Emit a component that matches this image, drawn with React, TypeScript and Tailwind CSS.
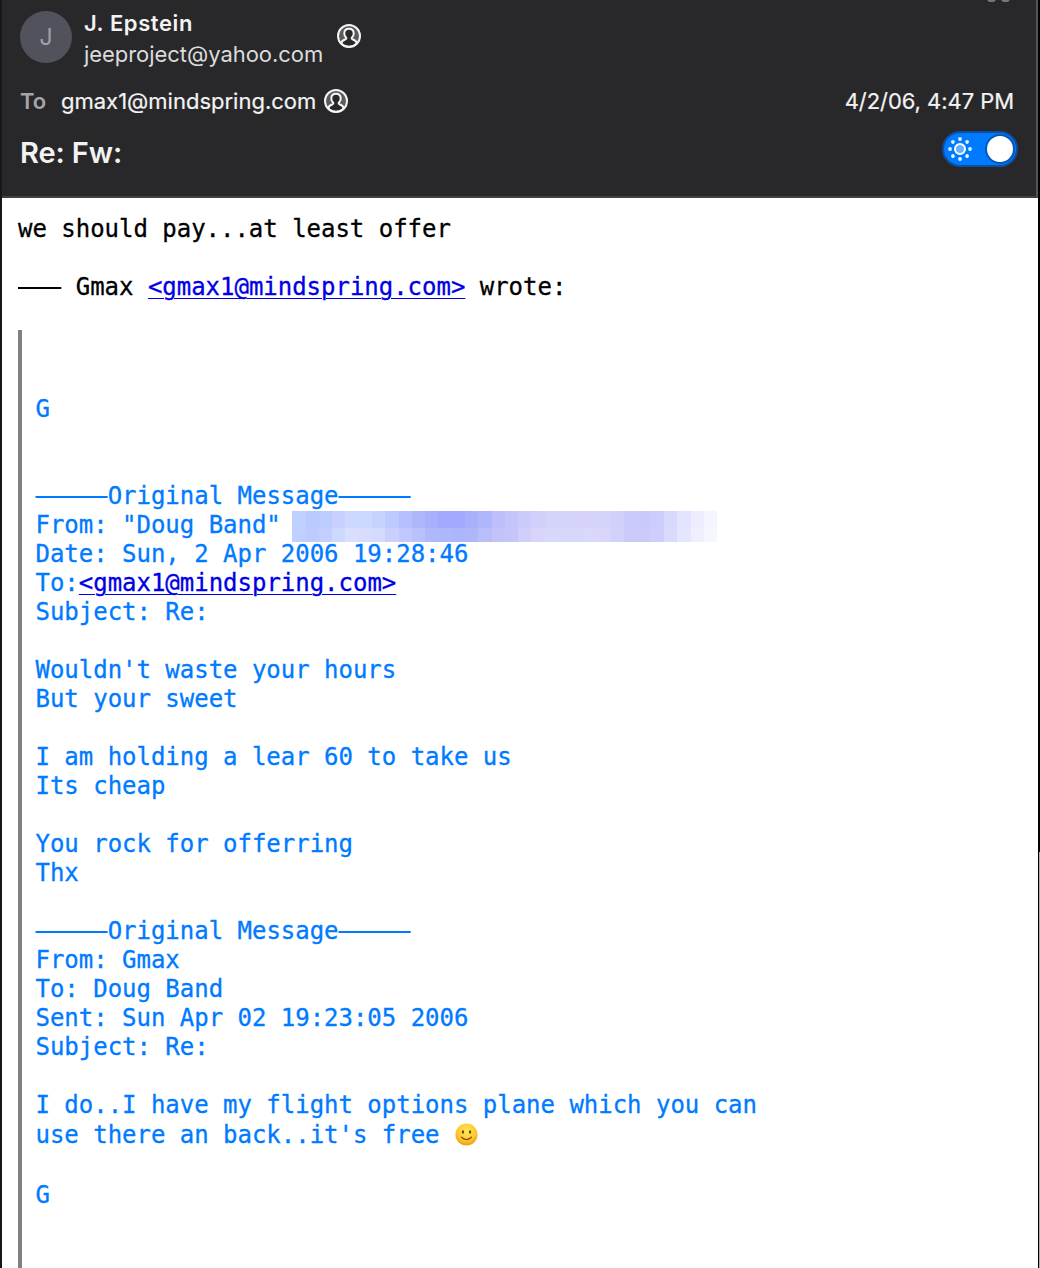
const TOP_ROW = [
  'bg-[#bfd1ff]', 'bg-[#b9caff]', 'bg-[#bcccff]', 'bg-[#c7d0ff]', 'bg-[#ccd8ff]', 'bg-[#ccd8ff]', 'bg-[#c7d3ff]', 'bg-[#bccaff]',
  'bg-[#b6bfff]', 'bg-[#b0b6fb]', 'bg-[#a8affd]', 'bg-[#a3a9ff]', 'bg-[#a3a9ff]', 'bg-[#a9b0fc]', 'bg-[#b0b6fb]', 'bg-[#bebefb]',
  'bg-[#c4c5fb]', 'bg-[#cacbfb]', 'bg-[#d1d0fb]', 'bg-[#d4d3fa]', 'bg-[#d4d3fa]', 'bg-[#d5d2fa]', 'bg-[#d5d3fb]', 'bg-[#d4d3fa]',
  'bg-[#d0d0fa]', 'bg-[#cacbfb]', 'bg-[#c9c9fb]', 'bg-[#ccccfd]', 'bg-[#d8d8fc]', 'bg-[#e3e3fd]', 'bg-[#eeedfe]', 'bg-[#f5f5ff]',
];

const BOTTOM_ROW = [
  'bg-[#c0d0ff]', 'bg-[#bdcbff]', 'bg-[#c3cfff]', 'bg-[#cfd8ff]', 'bg-[#d8dfff]', 'bg-[#dadcff]', 'bg-[#d4dbff]', 'bg-[#cbcffd]',
  'bg-[#c1c7ff]', 'bg-[#bac2fe]', 'bg-[#b0b7fc]', 'bg-[#adb7fc]', 'bg-[#adb6fc]', 'bg-[#afb7fb]', 'bg-[#b9befb]', 'bg-[#c3c2fb]',
  'bg-[#c6c5fb]', 'bg-[#d0cffb]', 'bg-[#d7d5fb]', 'bg-[#d8d8fb]', 'bg-[#d7d7fb]', 'bg-[#d7d6fb]', 'bg-[#d9d8fb]', 'bg-[#d8d7fb]',
  'bg-[#d2d1fb]', 'bg-[#cbcbfb]', 'bg-[#cbcafb]', 'bg-[#cecefd]', 'bg-[#dadafc]', 'bg-[#e5e5fd]', 'bg-[#efeffe]', 'bg-[#f6f6ff]',
];

function ContactIcon() {
  return (
    <svg viewBox="0 0 24 24" className="size-6 shrink-0" fill="none">
      <circle cx="12" cy="12" r="11" fill="#5b5b5e" />
      <path
        d="M4.200 19.400c.6-2.600 2.200-3.300 3.900-3.900 1.300-.4 1.500-1.100 1-1.900C7.800 12.500 7.300 11.300 7.300 9.500c0-2.900 1.900-4.700 4.700-4.700s4.700 1.800 4.700 4.700c0 1.800-.5 3-1.800 4.100-.5.8-.3 1.500 1 1.900 1.700.6 3.300 1.300 3.900 3.900-3.900 4.300-11.700 4.300-15.600 0Z"
        fill="#28282a"
        stroke="#f4f4f4"
        strokeWidth="2"
      />
      <circle cx="12" cy="12" r="11" stroke="#f4f4f4" strokeWidth="2" />
    </svg>
  );
}

function SunIcon() {
  const rays = [0, 45, 90, 135, 180, 225, 270, 315];
  return (
    <svg viewBox="0 0 24 24" className="size-6">
      <circle cx="12" cy="12" r="5" fill="#66b0ff" stroke="#fff" strokeWidth="2" />
      {rays.map((angle) => (
        <circle key={angle} cx="12" cy="2" r="1.9" fill="#e6f2ff" transform={`rotate(${angle} 12 12)`} />
      ))}
    </svg>
  );
}

function Smiley() {
  return (
    <svg viewBox="0 0 24 24" className="mb-[3px] ml-[1.5px] size-[23px]" role="img" aria-label="🙂">
      <defs>
        <radialGradient id="face" cx="50%" cy="35%" r="65%">
          <stop offset="0%" stopColor="#ffe65c" />
          <stop offset="65%" stopColor="#fdc92e" />
          <stop offset="100%" stopColor="#ee9a12" />
        </radialGradient>
      </defs>
      <circle cx="12" cy="12" r="11.5" fill="url(#face)" />
      <ellipse cx="8.3" cy="9.3" rx="1.2" ry="1.8" fill="#6b3f0c" />
      <ellipse cx="15.7" cy="9.3" rx="1.2" ry="1.8" fill="#6b3f0c" />
      <path d="M6.8 14.8c2.6 3.3 7.8 3.3 10.4 0" fill="none" stroke="#7a4a10" strokeWidth="1.3" strokeLinecap="round" />
    </svg>
  );
}

function Dashes({ count }: { count: number }) {
  return <span className="line-through decoration-2 [-webkit-text-stroke:0]">{'-'.repeat(count)}</span>;
}

function MailLink() {
  return (
    <a href="mailto:gmax1@mindspring.com" className="text-[#0000e6] underline decoration-1 underline-offset-[3px]">
      &lt;gmax1@mindspring.com&gt;
    </a>
  );
}

function Redacted() {
  return (
    <div className="ml-[11.5px] h-[31px] w-[425px] shrink-0">
      <div className="flex h-[17px]">
        {TOP_ROW.map((color, i) => <div key={i} className={`flex-1 ${color}`} />)}
      </div>
      <div className="flex h-[14px]">
        {BOTTOM_ROW.map((color, i) => <div key={i} className={`flex-1 ${color}`} />)}
      </div>
    </div>
  );
}

function Header() {
  return (
    <header className="h-[198px] overflow-hidden border-r-2 border-b-2 border-r-[#555558] border-b-[#414045] bg-[#28282a] pl-[18px] pr-[18px] font-[Inter,sans-serif] text-[#f3f3f3]">
      <div className="flex h-[74px] items-start pt-[11px]">
        <div className="flex size-[52px] items-center justify-center rounded-full bg-[#52525d] text-[23px] text-[#a1a1a8]">J</div>
        <div className="ml-3 w-[241px] whitespace-nowrap leading-[31px]">
          <div className="-mt-[3px] text-[22px] font-semibold tracking-[0.6px]">J. Epstein</div>
          <div className="text-[22px] tracking-[-0.05px] text-[#dcdcdc]">jeeproject@yahoo.com</div>
        </div>
        <div className="ml-3 mt-[13px]"><ContactIcon /></div>
        <svg viewBox="0 0 24 4" className="-mt-[11px] ml-auto mr-[7px] h-1 w-6" fill="#77777a">
          <ellipse cx="4.5" cy="0" rx="4" ry="2" />
          <ellipse cx="18.5" cy="0" rx="4" ry="2" />
        </svg>
      </div>
      <div className="flex h-[54px] items-center whitespace-nowrap text-[22px]">
        <span className="w-[41px] font-semibold text-[#a4a4a7]">To</span>
        <span className="w-[256px] [-webkit-text-stroke:0.2px]">gmax1@mindspring.com</span>
        <span className="ml-[7px]"><ContactIcon /></span>
        <span className="ml-auto mr-1 tracking-[-0.05px] [-webkit-text-stroke:0.2px]">4/2/06, 4:47 PM</span>
      </div>
      <div className="flex h-[46px] items-center justify-between">
        <h1 className="mt-[3px] text-[29px] font-semibold tracking-[-0.1px]">Re: Fw:</h1>
        <div className="-mt-[5px] flex h-9 w-[76px] items-center justify-between rounded-full border-2 border-[#0d4f9e] bg-[#007aff] pl-1 pr-[3px]">
          <SunIcon />
          <div className="size-[26px] rounded-full bg-white ring-2 ring-[#0557b5]" />
        </div>
      </div>
    </header>
  );
}

export default function App() {
  return (
    <div className="flex h-[1268px] w-[1040px] overflow-hidden bg-white">
      <div className="w-[2px] bg-[#171719]" />
      <div className="w-[1036px]">
        <Header />
        <main className="h-[1070px] overflow-hidden whitespace-pre pl-4 pt-[17px] font-['DejaVu_Sans_Mono',monospace] text-[24px] leading-[29px] tracking-[-0.02px] text-black [-webkit-text-stroke:0.3px]">
          <p>we should pay...at least offer</p>
          <p className="mt-[29px]"><Dashes count={3} /> Gmax <MailLink /> wrote:</p>
          <blockquote className="mt-7 h-[940px] border-l-4 border-[#808080] pl-[13.5px] pt-[65px] text-[#007aff]">
            <p>G</p>
            <p className="mt-[58px]"><Dashes count={5} />Original Message<Dashes count={5} /></p>
            <div className="flex h-[29px]"><span>From: "Doug Band"</span><Redacted /></div>
            <p>Date: Sun, 2 Apr 2006 19:28:46</p>
            <p>To:<MailLink /></p>
            <p>Subject: Re:</p>
            <p className="mt-[29px]">Wouldn't waste your hours</p>
            <p>But your sweet</p>
            <p className="mt-[29px]">I am holding a lear 60 to take us</p>
            <p>Its cheap</p>
            <p className="mt-[29px]">You rock for offerring</p>
            <p>Thx</p>
            <p className="mt-[29px]"><Dashes count={5} />Original Message<Dashes count={5} /></p>
            <p>From: Gmax</p>
            <p>To: Doug Band</p>
            <p>Sent: Sun Apr 02 19:23:05 2006</p>
            <p>Subject: Re:</p>
            <p className="mt-[29px]">I do..I have my flight options plane which you can</p>
            <p className="flex h-[31px] items-center">use there an back..it's free <Smiley /></p>
            <p className="mt-[30px]">G</p>
          </blockquote>
        </main>
      </div>
      <div className="w-px bg-black" />
      <div className="w-px">
        <div className="h-[852px] bg-black" />
        <div className="h-[416px] bg-[#a9adac]" />
      </div>
    </div>
  );
}
